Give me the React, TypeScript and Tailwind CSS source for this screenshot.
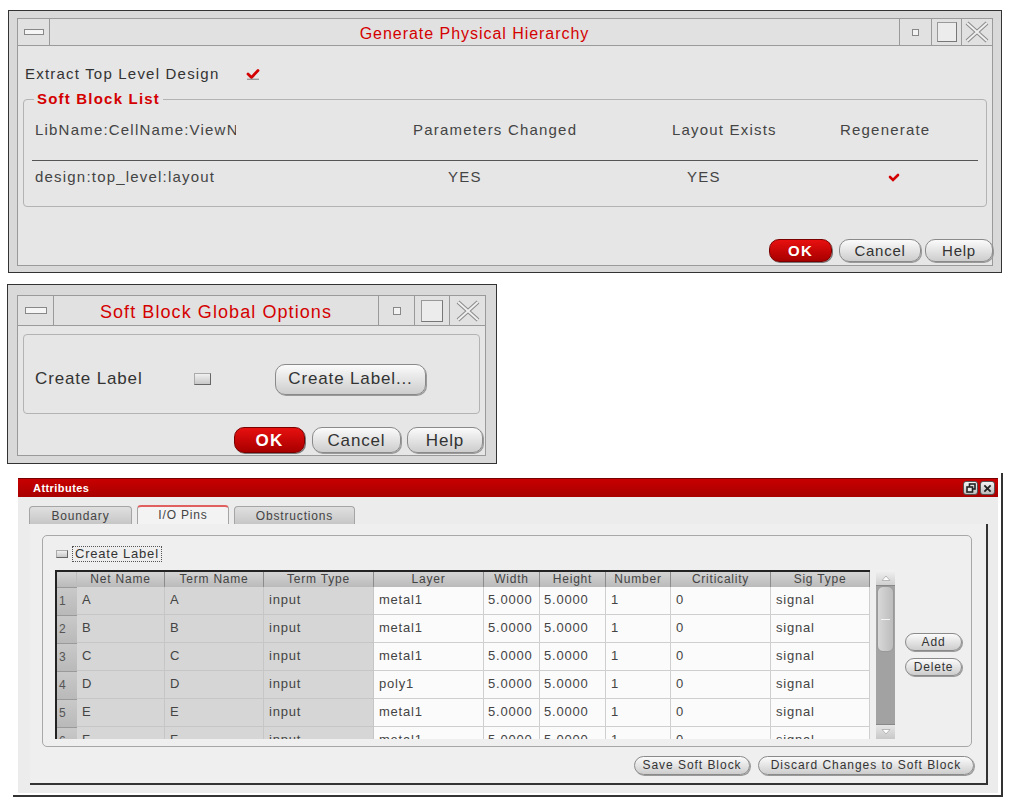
import React from 'react';

const Check: React.FC<{ className?: string }> = ({ className }) => (
  <svg viewBox="0 0 14 12" className={className}>
    <path d="M2 6 L5.5 9.5 L12 2.5" fill="none" stroke="#d40000" strokeWidth="2.8" strokeLinecap="round" />
    <path d="M1 11.3 L13 11.3" stroke="#9a9a9a" strokeWidth="1.4" />
  </svg>
);

const CloseX: React.FC = () => (
  <svg viewBox="0 0 26 22" className="w-[26px] h-[22px]">
    <path d="M3 2 L23 20 M23 2 L3 20" stroke="#8a8a8a" strokeWidth="4" />
    <path d="M3 2 L23 20 M23 2 L3 20" stroke="#efefef" strokeWidth="2" />
  </svg>
);

const Pill: React.FC<{ children: React.ReactNode; className?: string }> = ({ children, className }) => (
  <button
    className={
      'rounded-[10px] border border-[#8a8a8a] bg-linear-to-b from-[#fbfbfb] to-[#cdcdcd] text-[#333] shadow-[1px_1px_0_#9a9a9a] ' +
      (className ?? '')
    }
  >
    {children}
  </button>
);

const OkButton: React.FC<{ className?: string }> = ({ className }) => (
  <button
    className={
      'rounded-[10px] border border-[#7a0000] bg-linear-to-b from-[#e81010] to-[#a80000] text-white font-bold shadow-[1px_1px_0_#777] ' +
      (className ?? '')
    }
  >
    OK
  </button>
);

const rows = [
  ['A', 'A', 'input', 'metal1'],
  ['B', 'B', 'input', 'metal1'],
  ['C', 'C', 'input', 'metal1'],
  ['D', 'D', 'input', 'poly1'],
  ['E', 'E', 'input', 'metal1'],
  ['F', 'F', 'input', 'metal1'],
];

const headers = ['Net Name', 'Term Name', 'Term Type', 'Layer', 'Width', 'Height', 'Number', 'Criticality', 'Sig Type'];

export default function App() {
  return (
    <div className="min-h-screen bg-white font-['Liberation_Sans',Arial,sans-serif] text-[#333] pt-[10px]">
      {/* Generate Physical Hierarchy */}
      <div className="ml-[8px] w-[994px] h-[263px] border border-[#333] bg-[#d9d9d9] px-[8px] pt-[7px] pb-[6px] flex flex-col">
        <div className="h-[28px] flex border border-[#9a9a9a] bg-[#e1e1e1]">
          <div className="w-[32px] border-r border-[#9a9a9a] flex items-center justify-center">
            <div className="w-[20px] h-[6px] border border-[#888] bg-[#f5f5f5]" />
          </div>
          <div className="flex-1 text-center text-[#d40000] text-[16px] tracking-[0.06em] leading-[29px]">
            Generate Physical Hierarchy
          </div>
          <div className="w-[32px] border-l border-[#9a9a9a] flex items-center justify-center">
            <div className="w-[7px] h-[7px] border border-[#888] bg-[#f2f2f2]" />
          </div>
          <div className="w-[30px] border-l border-[#9a9a9a] flex items-center justify-center">
            <div className="w-[20px] h-[20px] border border-[#999] border-b-[#777] border-r-[#777] bg-[#ececec]" />
          </div>
          <div className="w-[31px] border-l border-[#9a9a9a] flex items-center justify-center">
            <CloseX />
          </div>
        </div>
        <div className="flex-1 flex flex-col bg-[#e6e6e6] border border-t-0 border-[#9a9a9a]">
          <div className="mt-[18px] ml-[7px] h-[20px] flex items-center">
            <span className="text-[15px] tracking-[0.08em] w-[221px]">Extract Top Level Design</span>
            <Check className="w-[14px] h-[12px]" />
          </div>
          <fieldset className="mx-[5px] mt-[7px] border border-[#b3b3b3] rounded-[4px] pb-[18px]">
            <legend className="ml-[10px] px-[3px] text-[15px] font-bold text-[#d40000] tracking-[0.08em] leading-[16px]">
              Soft Block List
            </legend>
            <div className="mt-[12px] pl-[11px] h-[22px] grid grid-cols-[378px_259px_168px_1fr] items-center text-[15px] tracking-[0.08em] text-[#444]">
              <div className="w-[201px] overflow-hidden whitespace-nowrap">LibName:CellName:ViewName</div>
              <div>Parameters Changed</div>
              <div>Layout Exists</div>
              <div>Regenerate</div>
            </div>
            <div className="mx-[8px] mt-[19px] h-px bg-[#555]" />
            <div className="mt-[5px] pl-[11px] h-[22px] grid grid-cols-[378px_259px_168px_1fr] items-center text-[15px] tracking-[0.08em] text-[#444]">
              <div>design:top_level:layout</div>
              <div className="pl-[35px]">YES</div>
              <div className="pl-[15px]">YES</div>
              <div className="pl-[48px]">
                <svg viewBox="0 0 12 10" className="w-[12px] h-[10px]">
                  <path d="M2 5 L5 8 L10 3" fill="none" stroke="#d40000" strokeWidth="2.6" strokeLinecap="round" />
                </svg>
              </div>
            </div>
          </fieldset>
          <div className="mt-auto mb-[3px] mr-[-1px] flex justify-end items-center">
            <OkButton className="w-[63px] h-[23px] text-[15px] tracking-[0.08em]" />
            <Pill className="ml-[7px] w-[82px] h-[23px] text-[15px] tracking-[0.05em]">Cancel</Pill>
            <Pill className="ml-[4px] w-[68px] h-[23px] text-[15px] tracking-[0.05em]">Help</Pill>
          </div>
        </div>
      </div>

      {/* Soft Block Global Options */}
      <div className="ml-[7px] mt-[11px] w-[490px] h-[180px] border border-[#333] bg-[#d9d9d9] pl-[9px] pr-[10px] pt-[10px] pb-[7px] flex flex-col">
        <div className="h-[31px] flex border border-[#9a9a9a] bg-[#e1e1e1]">
          <div className="w-[36px] border-r border-[#9a9a9a] flex items-center justify-center">
            <div className="w-[22px] h-[7px] border border-[#888] bg-[#f5f5f5]" />
          </div>
          <div className="flex-1 text-center text-[#d40000] text-[18px] tracking-[0.06em] leading-[32px]">
            Soft Block Global Options
          </div>
          <div className="w-[36px] border-l border-[#9a9a9a] flex items-center justify-center">
            <div className="w-[8px] h-[8px] border border-[#888] bg-[#f2f2f2]" />
          </div>
          <div className="w-[35px] border-l border-[#9a9a9a] flex items-center justify-center">
            <div className="w-[22px] h-[22px] border border-[#999] border-b-[#777] border-r-[#777] bg-[#ececec]" />
          </div>
          <div className="w-[36px] border-l border-[#9a9a9a] flex items-center justify-center">
            <CloseX />
          </div>
        </div>
        <div className="flex-1 flex flex-col bg-[#e6e6e6] border border-t-0 border-[#9a9a9a]">
          <div className="mx-[5px] mt-[8px] h-[80px] pt-[10px] border border-[#b3b3b3] rounded-[4px] flex items-center">
            <span className="ml-[11px] w-[159px] text-[17px] tracking-[0.05em]">Create Label</span>
            <div className="w-[17px] h-[12px] border border-[#aaa] border-b-[#666] border-r-[#666] bg-linear-to-b from-[#f0f0f0] to-[#c8c8c8]" />
            <Pill className="ml-[64px] w-[151px] h-[31px] text-[17px] tracking-[0.05em]">Create Label...</Pill>
          </div>
          <div className="mt-[13px] mr-[2px] flex justify-end items-center">
            <OkButton className="w-[71px] h-[26px] text-[17px] tracking-[0.08em]" />
            <Pill className="ml-[7px] w-[89px] h-[26px] text-[17px] tracking-[0.05em]">Cancel</Pill>
            <Pill className="ml-[6px] w-[76px] h-[26px] text-[17px] tracking-[0.05em]">Help</Pill>
          </div>
        </div>
      </div>

      {/* Attributes */}
      <div className="ml-[13px] mt-[9px] w-[990px] h-[324px] border-r-2 border-b-2 border-[#333] pl-[5px] pt-[5px]">
        <div className="w-[980px] h-[315px] bg-[#ececec] flex flex-col">
          <div className="h-[19px] flex items-center bg-linear-to-b from-[#c80000] to-[#a80000] border-t border-[#700]">
            <span className="ml-[15px] text-[11px] font-bold text-white tracking-[0.04em]">Attributes</span>
            <div className="ml-auto mr-[3px] flex gap-[2px]">
              <div className="w-[15px] h-[14px] rounded-[3px] border border-[#555] bg-linear-to-b from-[#f4f4f4] to-[#bdbdbd] flex items-center justify-center">
                <svg viewBox="0 0 10 10" className="w-[10px] h-[10px]">
                  <rect x="3.5" y="1" width="5.5" height="5" fill="none" stroke="#222" strokeWidth="1.6" />
                  <rect x="1" y="4" width="5.5" height="5" fill="#e8e8e8" stroke="#222" strokeWidth="1.6" />
                </svg>
              </div>
              <div className="w-[15px] h-[14px] rounded-[3px] border border-[#555] bg-linear-to-b from-[#f4f4f4] to-[#bdbdbd] flex items-center justify-center">
                <svg viewBox="0 0 10 10" className="w-[9px] h-[9px]">
                  <path d="M1.5 1.5 L8.5 8.5 M8.5 1.5 L1.5 8.5" stroke="#222" strokeWidth="2" />
                </svg>
              </div>
            </div>
          </div>
          <div className="mt-[8px] ml-[11px] flex items-end gap-[5px] text-[12px] tracking-[0.07em] text-[#444]">
            <div className="w-[103px] h-[18px] rounded-t-[4px] border border-b-0 border-[#a5a5a5] bg-linear-to-b from-[#e0e0e0] to-[#c6c6c6] text-center leading-[18px]">
              Boundary
            </div>
            <div className="w-[92px] h-[19px] rounded-t-[4px] border-x border-[#a5a5a5] border-t-2 border-t-[#e06060] bg-[#f3f3f3] text-center leading-[16px]">
              I/O Pins
            </div>
            <div className="w-[121px] h-[18px] rounded-t-[4px] border border-b-0 border-[#a5a5a5] bg-linear-to-b from-[#e0e0e0] to-[#c6c6c6] text-center leading-[18px]">
              Obstructions
            </div>
          </div>
          <div className="ml-[12px] w-[958px] h-[261px] bg-[#efefef] border-r-2 border-b-2 border-[#333] flex flex-col">
            <div className="ml-[12px] mt-[11px] w-[930px] h-[212px] border border-[#a8a8a8] rounded-[5px] flex flex-col">
              <div className="mt-[9px] ml-[13px] h-[17px] flex items-center">
                <div className="w-[12px] h-[8px] border border-[#aaa] border-b-[#666] border-r-[#666] bg-linear-to-b from-[#f0f0f0] to-[#c8c8c8]" />
                <span className="ml-[4px] px-[2px] border border-dotted border-[#555] text-[13px] tracking-[0.06em] leading-[14px]">
                  Create Label
                </span>
              </div>
              <div className="mt-[8px] ml-[12px] flex items-center">
                <div className="w-[815px] h-[169px] overflow-hidden border-l-2 border-t-2 border-[#222]">
                  <div className="grid grid-cols-[20px_88px_99px_110px_110px_56px_66px_65px_100px_99px] h-[15px] bg-linear-to-b from-[#d4d4d4] to-[#bababa] text-[12px] tracking-[0.065em] text-[#444] leading-[15px]">
                    <div className="border-r border-[#bdbdbd]" />
                    {headers.map((h) => (
                      <div key={h} className="text-center border-r border-[#8c8c8c]">
                        {h}
                      </div>
                    ))}
                  </div>
                  {rows.map((r, i) => (
                    <div
                      key={i}
                      className="grid grid-cols-[20px_88px_99px_110px_110px_56px_66px_65px_100px_99px] h-[28px] text-[13px] tracking-[0.06em] text-[#444] leading-[26px]"
                    >
                      <div className="pl-[2px] bg-linear-to-b from-[#c9c9c9] to-[#b9b9b9] border-t border-[#9a9a9a] text-[12px] text-[#555]">
                        {i + 1}
                      </div>
                      <div className="pl-[5px] bg-[#d6d6d6] border-b border-r border-[#c6c6c6]">{r[0]}</div>
                      <div className="pl-[5px] bg-[#d6d6d6] border-b border-r border-[#c6c6c6]">{r[1]}</div>
                      <div className="pl-[5px] bg-[#d6d6d6] border-b border-r border-[#c6c6c6]">{r[2]}</div>
                      <div className="pl-[5px] bg-[#fbfbfb] border-b border-r border-[#cfcfcf]">{r[3]}</div>
                      <div className="pl-[4px] bg-[#fbfbfb] border-b border-r border-[#cfcfcf]">5.0000</div>
                      <div className="pl-[4px] bg-[#fbfbfb] border-b border-r border-[#cfcfcf]">5.0000</div>
                      <div className="pl-[5px] bg-[#fbfbfb] border-b border-r border-[#cfcfcf]">1</div>
                      <div className="pl-[5px] bg-[#fbfbfb] border-b border-r border-[#cfcfcf]">0</div>
                      <div className="pl-[5px] bg-[#fbfbfb] border-b border-r border-[#cfcfcf]">signal</div>
                    </div>
                  ))}
                </div>
                <div className="ml-[6px] w-[19px] h-[169px] flex flex-col bg-[#a2a2a2]">
                  <div className="h-[16px] bg-linear-to-b from-[#f2f2f2] to-[#d0d0d0] flex items-center justify-center border-b border-[#888]">
                    <svg viewBox="0 0 10 6" className="w-[10px] h-[6px]">
                      <path d="M1 5.5 L5 1 L9 5.5 Z" fill="#fff" stroke="#aaa" strokeWidth="0.8" />
                    </svg>
                  </div>
                  <div className="h-[66px] mx-[1px] rounded-[6px] bg-linear-to-r from-[#d8d8d8] to-[#bcbcbc] border border-[#999] flex items-center justify-center">
                    <div className="w-[9px] h-px bg-[#f4f4f4]" />
                  </div>
                  <div className="flex-1" />
                  <div className="h-[15px] bg-linear-to-b from-[#e6e6e6] to-[#c8c8c8] flex items-center justify-center border-t border-[#888]">
                    <svg viewBox="0 0 10 6" className="w-[10px] h-[6px]">
                      <path d="M1 0.5 L5 5 L9 0.5 Z" fill="#fff" stroke="#aaa" strokeWidth="0.8" />
                    </svg>
                  </div>
                </div>
                <div className="ml-[10px] flex flex-col gap-[7px]">
                  <Pill className="w-[57px] h-[18px] text-[12px] tracking-[0.07em] leading-[16px]">Add</Pill>
                  <Pill className="w-[57px] h-[18px] text-[12px] tracking-[0.07em] leading-[16px]">Delete</Pill>
                </div>
              </div>
            </div>
            <div className="mt-[9px] mr-[12px] flex justify-end gap-[8px]">
              <Pill className="w-[116px] h-[19px] text-[12px] tracking-[0.08em] leading-[17px]">Save Soft Block</Pill>
              <Pill className="w-[216px] h-[19px] text-[12px] tracking-[0.08em] leading-[17px]">Discard Changes to Soft Block</Pill>
            </div>
          </div>
        </div>
      </div>
    </div>
  );
}
